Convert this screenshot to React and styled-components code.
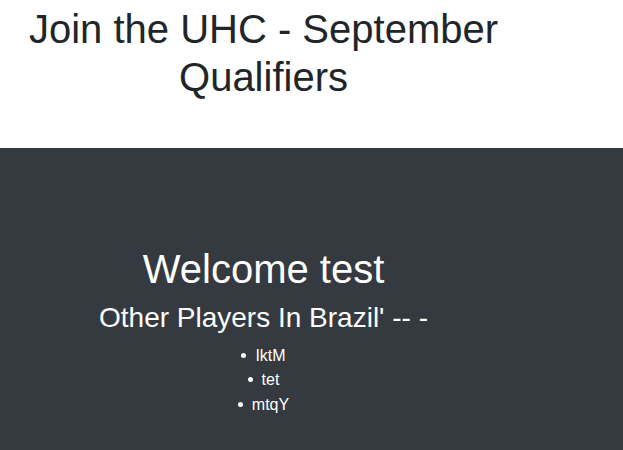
import styled, { createGlobalStyle } from 'styled-components';

const GlobalStyle = createGlobalStyle`
  body {
    margin: 0;
    font-family: "Liberation Sans", Arial, sans-serif;
    color: #212529;
    background: #fff;
  }
`;

const Header = styled.header`
  height: 148px;
  box-sizing: border-box;
  padding-top: 5px;
`;

const Column = styled.div`
  width: 527px;
  text-align: center;
`;

const Title = styled.h1`
  margin: 0;
  font-size: 40px;
  font-weight: 500;
  line-height: 1.2;
  color: ${props => props.light ? '#fff' : '#212529'};
  margin-bottom: 8px;
`;

const Dark = styled.section`
  background: #343a40;
  min-height: 302px;
  box-sizing: border-box;
  padding-top: 97px;
  color: #fff;
`;

const Sub = styled.h3`
  margin: 0 0 8px;
  font-size: 28px;
  font-weight: 500;
  line-height: 1.2;
`;

const Players = styled.ul`
  margin: 0;
  padding: 1px 0 0;
  list-style: none;
  font-size: 16px;
  line-height: 24.5px;
`;

const Player = styled.li`
  &::before {
    content: '';
    display: inline-block;
    width: 5px;
    height: 5px;
    border-radius: 50%;
    background: currentColor;
    margin-right: 9px;
    vertical-align: 3px;
  }
`;

const players = ['IktM', 'tet', 'mtqY'];

export default () => (
  <>
    <GlobalStyle />
    <Header>
      <Column>
        <Title>Join the UHC - September Qualifiers</Title>
      </Column>
    </Header>
    <Dark>
      <Column>
        <Title light>Welcome test</Title>
        <Sub>Other Players In Brazil' -- -</Sub>
        <Players>
          {players.map(p => <Player key={p}>{p}</Player>)}
        </Players>
      </Column>
    </Dark>
  </>
);
